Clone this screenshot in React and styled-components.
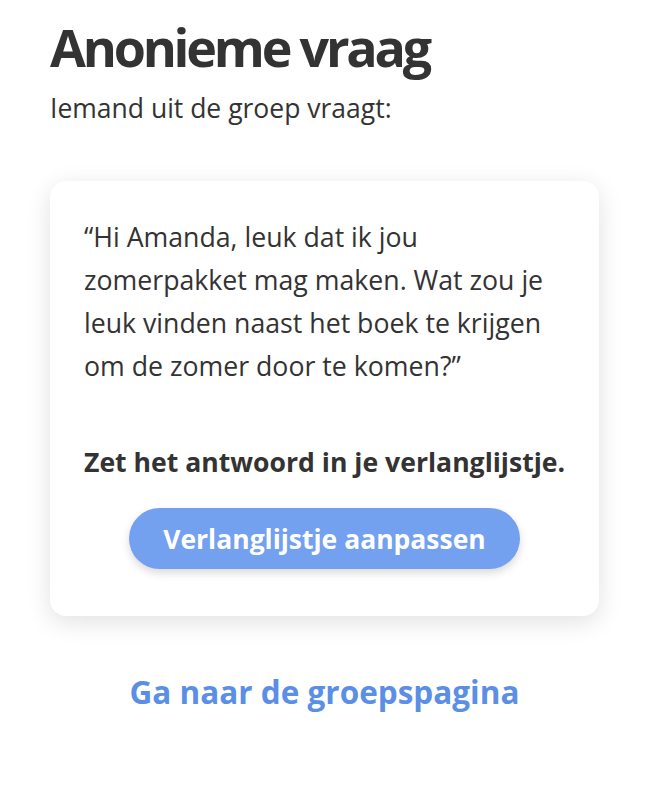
import styled, { createGlobalStyle } from "styled-components";

const Global = createGlobalStyle`
  body {
    margin: 0;
    background: #fff;
    font-family: "Open Sans", "Noto Sans", sans-serif;
    color: #333;
  }
`;

const Page = styled.main`
  padding: 17px 50px 0 50px;
  display: flex;
  flex-direction: column;
`;

const Title = styled.h1`
  margin: 0;
  font-size: 52px;
  font-weight: 700;
  letter-spacing: -3.2px;
  line-height: 60px;
  color: #333;
`;

const Subtitle = styled.p`
  margin: 14px 0 0 0;
  font-size: 26.5px;
  line-height: 34px;
  color: #333;
`;

const Card = styled.section`
  margin-top: 56px;
  background: #fff;
  border-radius: 16px;
  box-shadow: 0 6px 24px rgba(0, 0, 0, 0.12);
  padding: 34px 34px 47px 34px;
  display: flex;
  flex-direction: column;
`;

const Quote = styled.p`
  margin: 0;
  font-size: 26.7px;
  line-height: 43px;
  color: #333;
`;

const Instruction = styled.p`
  margin: 54px 0 0 0;
  font-size: 26.6px;
  line-height: 43px;
  font-weight: 700;
  white-space: nowrap;
  color: #333;
`;

const Button = styled.button`
  align-self: center;
  margin-top: 24px;
  width: 391px;
  height: 61px;
  border: none;
  border-radius: 31px;
  background: #73a0ef;
  color: #fff;
  font-family: inherit;
  font-size: 26.5px;
  font-weight: 700;
  box-shadow: 0 4px 8px rgba(0, 0, 0, 0.15);
  cursor: pointer;
`;

const Link = styled.a`
  align-self: center;
  margin-top: 55px;
  font-size: 31.5px;
  line-height: 42px;
  font-weight: 700;
  color: #5b8fe5;
  text-decoration: none;
`;

const App = () => {
  return (
    <>
      <Global />
      <Page>
        <Title>Anonieme vraag</Title>
        <Subtitle>Iemand uit de groep vraagt:</Subtitle>
        <Card>
          <Quote>
            “Hi Amanda, leuk dat ik jou zomerpakket mag maken. Wat zou je leuk
            vinden naast het boek te krijgen om de zomer door te komen?”
          </Quote>
          <Instruction>Zet het antwoord in je verlanglijstje.</Instruction>
          <Button>Verlanglijstje aanpassen</Button>
        </Card>
        <Link href="#">Ga naar de groepspagina</Link>
      </Page>
    </>
  );
};

export default App;
